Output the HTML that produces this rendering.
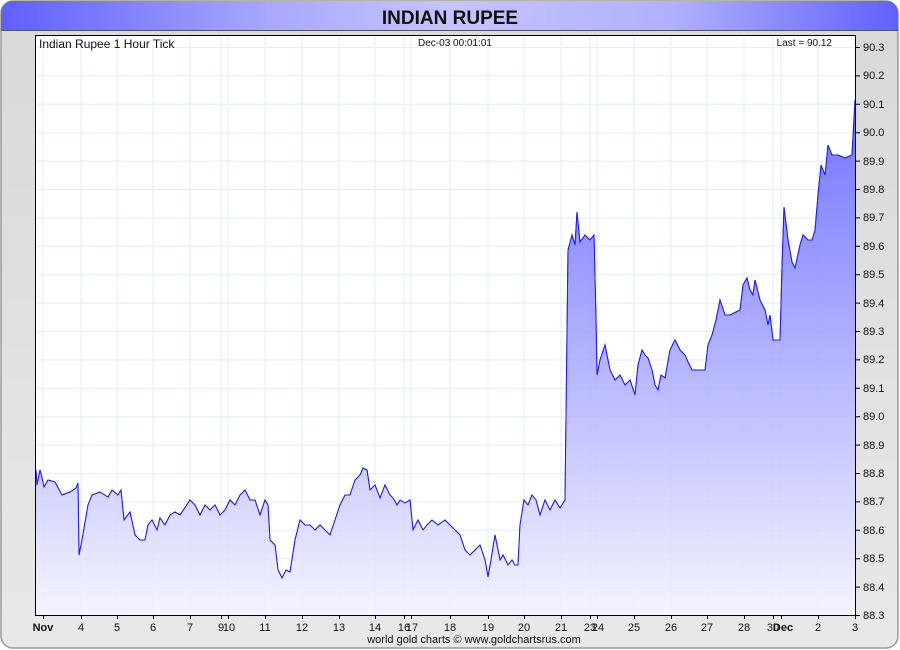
<!DOCTYPE html>
<html><head><style>
body{margin:0;width:900px;height:650px;background:#fff;font-family:"Liberation Sans",sans-serif;overflow:hidden}
</style></head><body>
<svg width="900" height="650" xmlns="http://www.w3.org/2000/svg" style="position:absolute;left:0;top:0">
<defs>
<linearGradient id="tb" x1="0" x2="1" y1="0" y2="0">
<stop offset="0" stop-color="#5f5fff"/><stop offset="0.3" stop-color="#a8a8ff"/><stop offset="0.5" stop-color="#c4c4ff"/><stop offset="0.75" stop-color="#b0b0ff"/><stop offset="1" stop-color="#6060ff"/></linearGradient>
<linearGradient id="fl" x1="0" x2="0" y1="100" y2="615" gradientUnits="userSpaceOnUse">
<stop offset="0" stop-color="#5a5aff"/><stop offset="1" stop-color="#f2f2ff"/></linearGradient>
<linearGradient id="bg" x1="0" x2="0" y1="0" y2="1"><stop offset="0" stop-color="#d8d8d8"/><stop offset="1" stop-color="#e8e8e8"/></linearGradient>
</defs>
<rect x="1" y="1" width="897" height="647" rx="12" fill="url(#bg)" stroke="#999" stroke-width="1.5"/>
<path d="M1 30 V13 A12 12 0 0 1 13 1 H886 A12 12 0 0 1 898 13 V30 Z" fill="url(#tb)"/>
<line x1="1" y1="30.5" x2="898" y2="30.5" stroke="#555" stroke-width="1"/>
<text x="450" y="24" text-anchor="middle" font-size="19" font-weight="bold" fill="#111">INDIAN RUPEE</text>
<rect x="35.5" y="35.5" width="820" height="580" fill="#fff"/>
<g stroke="#e0eef8" stroke-width="1">
<path d="M43 36V615M81 36V615M117 36V615M153 36V615M190 36V615M221 36V615M228 36V615M265 36V615M302 36V615M339 36V615M375 36V615M404 36V615M411 36V615M450 36V615M488 36V615M524 36V615M561 36V615M590 36V615M597 36V615M634 36V615M671 36V615M707 36V615M744 36V615M773 36V615M781 36V615M818 36V615"/>
<path d="M36 47.5H855M36 75.9H855M36 104.3H855M36 132.7H855M36 161.1H855M36 189.5H855M36 217.9H855M36 246.3H855M36 274.7H855M36 303.1H855M36 331.5H855M36 359.9H855M36 388.3H855M36 416.7H855M36 445.1H855M36 473.5H855M36 501.9H855M36 530.3H855M36 558.7H855M36 587.1H855"/>
</g>
<path id="ln" d="M36 470 L37 485 L40 470 L42 478 L44 487 L48 480 L55 482 L62 495 L70 492 L76 488 L78 483 L79 555 L82 540 L88 505 L92 495 L100 492 L108 497 L112 490 L118 495 L121 490 L124 520 L130 512 L135 535 L140 540 L145 540 L148 525 L152 520 L157 530 L160 518 L165 525 L170 515 L175 512 L180 515 L190 500 L195 505 L200 515 L205 505 L210 510 L215 505 L220 515 L225 510 L230 500 L235 505 L240 495 L245 490 L250 500 L255 500 L260 515 L265 500 L268 505 L270 540 L275 545 L278 570 L282 578 L286 570 L290 572 L295 540 L300 520 L305 525 L310 525 L315 530 L320 525 L325 530 L330 535 L335 520 L340 505 L345 495 L350 495 L355 480 L360 475 L363 468 L367 470 L370 490 L375 485 L380 498 L385 485 L390 495 L393 498 L397 505 L400 500 L405 503 L410 500 L413 530 L418 520 L423 530 L427 525 L432 520 L438 525 L445 520 L450 525 L455 530 L460 535 L465 550 L470 555 L475 550 L480 545 L485 560 L488 577 L491 560 L495 535 L500 560 L503 555 L508 565 L512 560 L515 565 L518 565 L520 525 L524 500 L528 505 L532 495 L536 500 L540 515 L545 500 L550 510 L555 500 L560 508 L565 500 L568 250 L572 235 L575 245 L577 212 L580 242 L585 235 L590 240 L594 235 L596 320 L597 375 L600 360 L605 345 L610 370 L615 380 L620 375 L625 385 L630 380 L635 395 L638 365 L642 350 L645 355 L648 358 L652 370 L655 385 L658 390 L661 375 L665 378 L670 350 L675 340 L680 350 L685 355 L688 362 L692 370 L700 370 L705 370 L708 345 L712 335 L716 320 L720 300 L725 315 L730 315 L740 310 L743 285 L747 278 L750 290 L753 295 L755 280 L760 300 L765 310 L768 325 L770 315 L773 340 L780 340 L782 268 L784 207 L788 240 L792 262 L795 268 L800 245 L803 235 L808 240 L812 240 L815 230 L818 195 L821 165 L825 175 L828 145 L832 155 L838 155 L845 158 L852 155 L855 100" fill="none" stroke="#1a1aff" stroke-width="1"/>
<path d="M36 470 L37 485 L40 470 L42 478 L44 487 L48 480 L55 482 L62 495 L70 492 L76 488 L78 483 L79 555 L82 540 L88 505 L92 495 L100 492 L108 497 L112 490 L118 495 L121 490 L124 520 L130 512 L135 535 L140 540 L145 540 L148 525 L152 520 L157 530 L160 518 L165 525 L170 515 L175 512 L180 515 L190 500 L195 505 L200 515 L205 505 L210 510 L215 505 L220 515 L225 510 L230 500 L235 505 L240 495 L245 490 L250 500 L255 500 L260 515 L265 500 L268 505 L270 540 L275 545 L278 570 L282 578 L286 570 L290 572 L295 540 L300 520 L305 525 L310 525 L315 530 L320 525 L325 530 L330 535 L335 520 L340 505 L345 495 L350 495 L355 480 L360 475 L363 468 L367 470 L370 490 L375 485 L380 498 L385 485 L390 495 L393 498 L397 505 L400 500 L405 503 L410 500 L413 530 L418 520 L423 530 L427 525 L432 520 L438 525 L445 520 L450 525 L455 530 L460 535 L465 550 L470 555 L475 550 L480 545 L485 560 L488 577 L491 560 L495 535 L500 560 L503 555 L508 565 L512 560 L515 565 L518 565 L520 525 L524 500 L528 505 L532 495 L536 500 L540 515 L545 500 L550 510 L555 500 L560 508 L565 500 L568 250 L572 235 L575 245 L577 212 L580 242 L585 235 L590 240 L594 235 L596 320 L597 375 L600 360 L605 345 L610 370 L615 380 L620 375 L625 385 L630 380 L635 395 L638 365 L642 350 L645 355 L648 358 L652 370 L655 385 L658 390 L661 375 L665 378 L670 350 L675 340 L680 350 L685 355 L688 362 L692 370 L700 370 L705 370 L708 345 L712 335 L716 320 L720 300 L725 315 L730 315 L740 310 L743 285 L747 278 L750 290 L753 295 L755 280 L760 300 L765 310 L768 325 L770 315 L773 340 L780 340 L782 268 L784 207 L788 240 L792 262 L795 268 L800 245 L803 235 L808 240 L812 240 L815 230 L818 195 L821 165 L825 175 L828 145 L832 155 L838 155 L845 158 L852 155 L855 100 L855 615 L36 615 Z" fill="url(#fl)" opacity="0.85"/>
<use href="#ln"/>
<rect x="35.5" y="35.5" width="820" height="580" fill="none" stroke="#000" stroke-width="1"/>
<g stroke="#000" stroke-width="1">
<path d="M855 47.5h5M855 75.9h5M855 104.3h5M855 132.7h5M855 161.1h5M855 189.5h5M855 217.9h5M855 246.3h5M855 274.7h5M855 303.1h5M855 331.5h5M855 359.9h5M855 388.3h5M855 416.7h5M855 445.1h5M855 473.5h5M855 501.9h5M855 530.3h5M855 558.7h5M855 587.1h5M855 615.5h5"/>
<path d="M43.5 615v4M81.5 615v4M117.5 615v4M153.5 615v4M190.5 615v4M221.5 615v4M228.5 615v4M265.5 615v4M302.5 615v4M339.5 615v4M375.5 615v4M404.5 615v4M411.5 615v4M450.5 615v4M488.5 615v4M524.5 615v4M561.5 615v4M590.5 615v4M597.5 615v4M634.5 615v4M671.5 615v4M707.5 615v4M744.5 615v4M773.5 615v4M781.5 615v4M818.5 615v4M855.5 615v4"/>
</g>
<g font-size="11" fill="#111">
<text x="863" y="51">90.3</text><text x="863" y="79">90.2</text><text x="863" y="108">90.1</text><text x="863" y="136">90.0</text><text x="863" y="165">89.9</text><text x="863" y="193">89.8</text><text x="863" y="221">89.7</text><text x="863" y="250">89.6</text><text x="863" y="278">89.5</text><text x="863" y="307">89.4</text><text x="863" y="335">89.3</text><text x="863" y="363">89.2</text><text x="863" y="392">89.1</text><text x="863" y="420">89.0</text><text x="863" y="449">88.9</text><text x="863" y="477">88.8</text><text x="863" y="505">88.7</text><text x="863" y="534">88.6</text><text x="863" y="562">88.5</text><text x="863" y="591">88.4</text><text x="863" y="619">88.3</text>
</g>
<g font-size="11" fill="#111" text-anchor="middle">
<text x="43" y="631" font-weight="bold">Nov</text><text x="81" y="631">4</text><text x="117" y="631">5</text><text x="153" y="631">6</text><text x="190" y="631">7</text><text x="221" y="631">9</text><text x="229" y="631">10</text><text x="265" y="631">11</text><text x="302" y="631">12</text><text x="339" y="631">13</text><text x="375" y="631">14</text><text x="404" y="631">16</text><text x="412" y="631">17</text><text x="450" y="631">18</text><text x="488" y="631">19</text><text x="524" y="631">20</text><text x="561" y="631">21</text><text x="590" y="631">23</text><text x="598" y="631">24</text><text x="634" y="631">25</text><text x="671" y="631">26</text><text x="707" y="631">27</text><text x="744" y="631">28</text><text x="773" y="631">30</text><text x="783" y="631" font-weight="bold">Dec</text><text x="818" y="631">2</text><text x="855" y="631">3</text>
</g>
<text x="474" y="643" font-size="11" text-anchor="middle" fill="#111">world gold charts © www.goldchartsrus.com</text>
<text x="39" y="48" font-size="12" fill="#111">Indian Rupee 1 Hour Tick</text>
<text x="455" y="46" font-size="10" text-anchor="middle" fill="#111">Dec-03  00:01:01</text>
<text x="832" y="46" font-size="10" text-anchor="end" fill="#111">Last = 90.12</text>
</svg>
</body></html>
